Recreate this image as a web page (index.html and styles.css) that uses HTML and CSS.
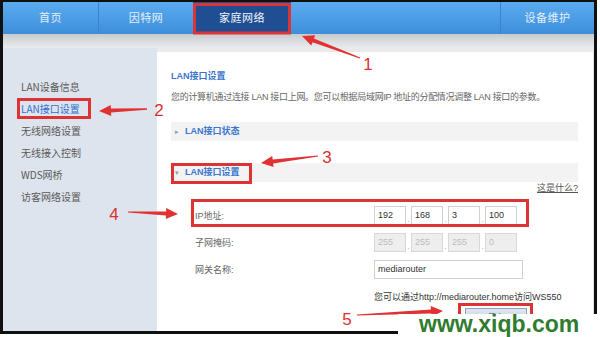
FILE: index.html
```html
<!DOCTYPE html>
<html lang="zh-CN">
<head>
<meta charset="utf-8">
<title>LAN接口设置</title>
<link rel="stylesheet" href="styles.css">
</head>
<body>
<div class="screen">
  <div class="nav">
    <div class="tab w95">首页</div>
    <div class="sep"></div>
    <div class="tab w94">因特网</div>
    <div class="tab active">家庭网络</div>
    <div class="grow"></div>
    <div class="sep"></div>
    <div class="tab w93">设备维护</div>
  </div>
  <div class="shade"></div>
  <div class="body">
    <div class="side">
      <div class="sitem">LAN设备信息</div>
      <div class="sitem cur">LAN接口设置</div>
      <div class="sitem">无线网络设置</div>
      <div class="sitem">无线接入控制</div>
      <div class="sitem">WDS网桥</div>
      <div class="sitem">访客网络设置</div>
    </div>
    <div class="main">
      <div class="title">LAN接口设置</div>
      <div class="desc">您的计算机通过连接 LAN 接口上网。您可以根据局域网IP 地址的分配情况调整 LAN 接口的参数。</div>
      <div class="bar"><span class="caret">▸</span><span class="bartext">LAN接口状态</span></div>
      <div class="bar bar2"><span class="caret">▾</span><span class="bartext">LAN接口设置</span></div>
      <div class="help"><span class="helplink">这是什么?</span></div>
      <div class="row">
        <div class="label">IP地址:</div>
        <div class="field">192</div><div class="dot">.</div>
        <div class="field">168</div><div class="dot">.</div>
        <div class="field">3</div><div class="dot">.</div>
        <div class="field">100</div>
      </div>
      <div class="row">
        <div class="label">子网掩码:</div>
        <div class="field off">255</div><div class="dot">.</div>
        <div class="field off">255</div><div class="dot">.</div>
        <div class="field off">255</div><div class="dot">.</div>
        <div class="field off">0</div>
      </div>
      <div class="row">
        <div class="label">网关名称:</div>
        <div class="field wide">mediarouter</div>
      </div>
      <div class="info">您可以通过http://mediarouter.home访问WS550</div>
      <div class="btnrow"><div class="btn">保存</div></div>
    </div>
  </div>
</div>

<svg class="annot" width="600" height="337" viewBox="0 0 600 337">
  <g fill="none" stroke="#dc3434" stroke-width="3">
    <rect x="194.5" y="4.5" width="95" height="28.5"/>
    <rect x="18.5" y="99.5" width="71" height="18"/>
    <rect x="172.5" y="164.5" width="78" height="18"/>
    <rect x="192.5" y="200.5" width="335" height="25"/>
    <rect x="459.5" y="304.5" width="72" height="30"/>
  </g>
  <g fill="#e03232">
    <polygon points="360.2,57.4 313.9,38.4 315.2,35.2 302,36 311.2,45.4 312.5,42.2 359.8,58.6"/>
    <polygon points="147,108.2 110.9,108.5 110.8,105 99,111 111.2,116 111.1,112.5 147,109.8"/>
    <polygon points="317.9,155.4 272.7,159.5 272.2,156 261,163 273.6,167 273.1,163.5 318.1,156.6"/>
    <polygon points="128,212.6 165.9,215.5 165.8,219 178,214 166.2,208 166.1,211.5 128,211.4"/>
    <polygon points="357,315.6 431.1,313.6 431.3,317.1 443,311 430.7,306.1 430.9,309.6 357,314.4"/>
  </g>
  <g class="num" fill="#d83030" text-anchor="middle">
    <text x="368" y="70">1</text>
    <text x="159" y="116">2</text>
    <text x="327" y="163">3</text>
    <text x="114" y="220">4</text>
    <text x="347" y="325">5</text>
  </g>
</svg>

<div class="watermark">www.xiqb.com</div>
</body>
</html>
```

FILE: styles.css
```css
html, body {
  margin: 0;
  padding: 0;
  background: #ffffff;
}
body {
  width: 600px;
  height: 337px;
  position: relative;
  overflow: hidden;
  font-family: "Liberation Sans", "Noto Sans CJK SC", sans-serif;
}
.screen {
  width: 591px;
  height: 329px;
  border: 3px solid #101010;
  border-top-width: 2px;
  display: flex;
  flex-direction: column;
  background: #ececec;
}
.nav {
  height: 32px;
  display: flex;
  background: linear-gradient(#5aabee, #3e8fdb);
  flex: none;
}
.tab {
  height: 32px;
  line-height: 31px;
  text-align: center;
  font-size: 11px;
  color: #e4effb;
  font-family: "Noto Sans CJK SC", sans-serif;
  letter-spacing: 0.5px;
}
.w95 { width: 95px; }
.w94 { width: 94px; }
.w93 { width: 93px; }
.active {
  width: 98px;
  background: #1f4e93;
  color: #f2f6fc;
}
.grow { flex: 1; }
.sep {
  width: 1px;
  background: #3b84cb;
}
.shade {
  height: 14px;
  flex: none;
  background: linear-gradient(#c9cccf, #e9ebed);
}
.body {
  flex: 1;
  display: flex;
  background: #eaeaea;
}
.side {
  width: 136px;
  padding: 28px 0 0 18px;
  background: #dee4ed;
}
.sitem {
  height: 22px;
  line-height: 22px;
  font-size: 10px;
  color: #5a5a5a;
  font-family: "Noto Sans CJK SC", sans-serif;
}
.sitem.cur {
  color: #2f6fd3;
}
.main {
  flex: 1;
  margin-top: 4px;
  background: #ffffff;
  padding: 0 15px 0 14px;
  font-size: 9px;
  color: #666;
  border-right: 1px solid #e2e2e2;
}
.title {
  margin-top: 17px;
  line-height: 14px;
  font-size: 9px;
  font-weight: bold;
  color: #3a76cd;
}
.desc {
  margin-top: 7px;
  line-height: 14px;
  font-size: 9px;
  color: #666;
  white-space: nowrap;
  letter-spacing: -0.3px;
}
.bar {
  margin-top: 18px;
  height: 19px;
  line-height: 19px;
  background: #f3f3f3;
  display: flex;
  align-items: center;
}
.bar2 {
  margin-top: 22px;
}
.caret {
  width: 14px;
  padding-left: 4px;
  font-size: 7px;
  color: #999;
  box-sizing: border-box;
}
.bartext {
  font-size: 9px;
  font-weight: bold;
  color: #3a76cd;
}
.help {
  line-height: 12px;
  height: 12px;
  text-align: right;
}
.helplink {
  text-decoration: underline;
  color: #555;
  font-size: 9px;
}
.row {
  display: flex;
  align-items: center;
  height: 19px;
  margin-top: 8px;
}
.help + .row {
  margin-top: 12px;
}
.label {
  width: 179px;
  padding-left: 24px;
  font-size: 9px;
  color: #666;
}
.field {
  width: 32px;
  height: 19px;
  box-sizing: border-box;
  border: 1px solid #d0d0d0;
  padding-left: 3px;
  line-height: 17px;
  font-size: 9px;
  color: #333;
  background: #fff;
}
.field.off {
  background: #eeeeee;
  border-color: #d8d8d8;
  color: #bdbdbd;
}
.field.wide {
  width: 149px;
}
.dot {
  width: 5px;
  align-self: flex-end;
  line-height: 10px;
  font-size: 8px;
  color: #999;
  text-align: center;
}
.info {
  margin-top: 12px;
  line-height: 12px;
  padding-left: 203px;
  font-size: 9px;
  color: #333;
  white-space: nowrap;
}
.btnrow {
  margin-top: 5px;
  padding-left: 294px;
}
.btn {
  width: 62px;
  height: 20px;
  box-sizing: border-box;
  border: 1px solid #8ea3bb;
  background: linear-gradient(#dde6f0, #bccbdc);
  text-align: center;
  line-height: 18px;
  font-size: 9px;
  color: #333;
}
.annot {
  position: absolute;
  left: 0;
  top: 0;
  pointer-events: none;
}
.num {
  font-family: "Liberation Sans", sans-serif;
  font-size: 17px;
}
.watermark {
  position: absolute;
  left: 398px;
  top: 314px;
  width: 181px;
  height: 23px;
  padding-left: 21px;
  background: #ffffff;
  color: #2f7b2f;
  font-family: "Liberation Sans", sans-serif;
  font-weight: bold;
  font-size: 23px;
  line-height: 21px;
  white-space: nowrap;
}
```
